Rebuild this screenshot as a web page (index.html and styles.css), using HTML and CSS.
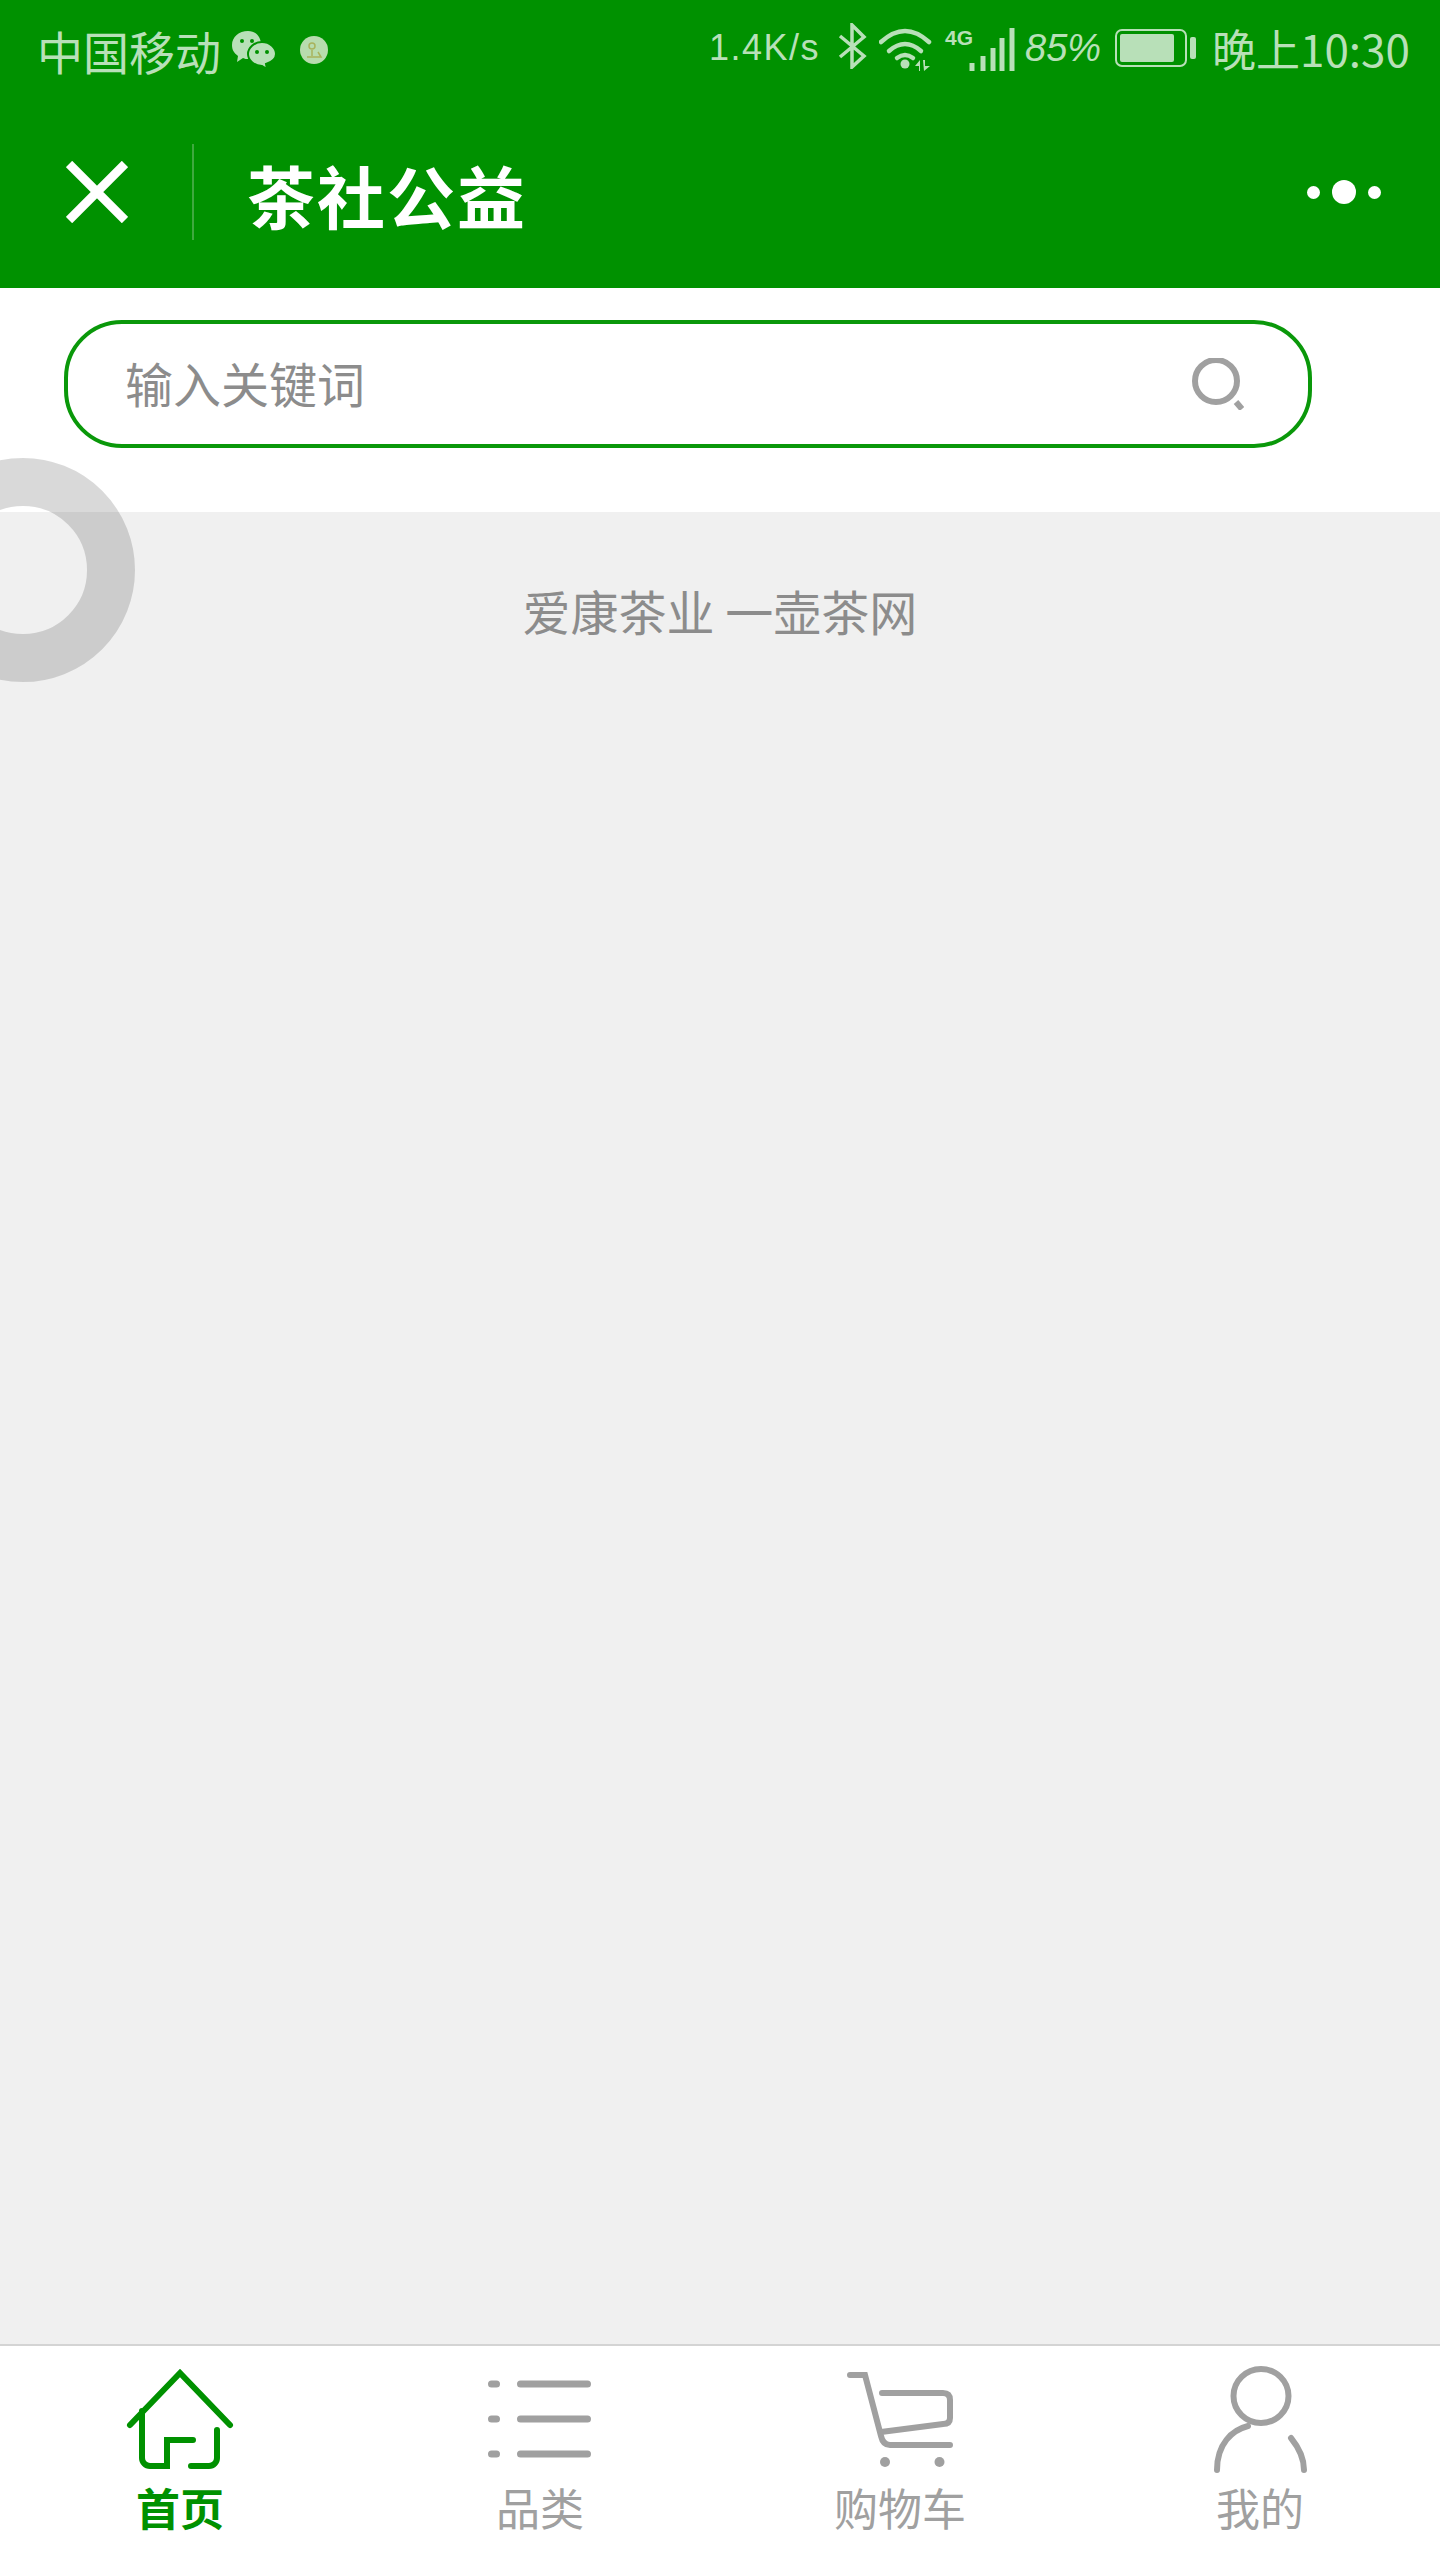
FILE: index.html

```html
<!DOCTYPE html>
<html>
  <head>
    <title>茶社公益</title>
    <link rel="stylesheet" href="styles.css">
  </head>
  <body>
    <div id="page">
      <header class="top">
        <div class="status">
          <div class="status-left">
            <span class="carrier">中国移动</span>
            <svg class="wechat" width="44" height="38" viewBox="0 0 44 38">
              <path d="M16 0C7 0 0 6 0 14c0 5 2 8 6 11l-1 6 6-4c2 1 3 1 5 1 7 0 13-7 13-14S25 0 16 0z" fill="#b8e0b8"/>
              <path d="M30 11c-8 0-14 6-14 12s6 12 14 12l5 3-1-5c6-2 10-6 10-10 0-6-6-12-14-12z" fill="#b8e0b8" stroke="#009100" stroke-width="2"/>
              <circle cx="10" cy="10" r="2" fill="#009100"/>
              <circle cx="20" cy="10" r="2" fill="#009100"/>
              <circle cx="25" cy="21" r="2" fill="#009100"/>
              <circle cx="35" cy="21" r="2" fill="#009100"/>
            </svg>
            <svg class="locate" width="28" height="28" viewBox="0 0 28 28">
              <circle cx="14" cy="14" r="14" fill="#b8dcae"/>
              <circle cx="12" cy="10" r="3" fill="none" stroke="#a9b35c" stroke-width="1.5"/>
              <path d="M12 14v6M7 21h14l-3-5" fill="none" stroke="#a9b35c" stroke-width="1.5"/>
            </svg>
          </div>
          <div class="status-right">
            <span class="speed">1.4K/s</span>
            <svg class="bt" width="30" height="46" viewBox="0 0 30 46">
              <path d="M3 13L27 33L15 44V2L27 14L3 34" fill="none" stroke="#b8e0b8" stroke-width="3.5"/>
            </svg>
            <svg class="wifi" width="53" height="43" viewBox="0 0 53 43">
              <path d="M2 14Q26-8 50 14" fill="none" stroke="#b8e0b8" stroke-width="4.5" stroke-linecap="round"/>
              <path d="M10 23Q26 9 42 23" fill="none" stroke="#b8e0b8" stroke-width="4.5" stroke-linecap="round"/>
              <path d="M18 30Q26 24 34 30" fill="none" stroke="#b8e0b8" stroke-width="4.5" stroke-linecap="round"/>
              <circle cx="26" cy="36" r="4.5" fill="#b8e0b8"/>
              <path d="M36 38l5-6v11h-1v-5zM44 32h2v6h5l-6 5z" fill="#b8e0b8"/>
            </svg>
            <div class="cell">
              <span class="net">4G</span>
              <svg width="46" height="43" viewBox="0 0 46 43">
                <path d="M3 43V35M14 43V28M24 43V20M33 43V10M43 43V0" stroke="#b8e0b8" stroke-width="5"/>
              </svg>
            </div>
            <span class="percent">85%</span>
            <svg class="battery" width="81" height="38" viewBox="0 0 81 38">
              <rect x="1" y="1" width="70" height="36" rx="6" fill="none" stroke="#b8e0b8" stroke-width="2"/>
              <rect x="5" y="5" width="54" height="28" rx="2" fill="#b8e0b8"/>
              <rect x="75" y="8" width="6" height="22" rx="2" fill="#b8e0b8"/>
            </svg>
            <span class="clock">晚上10:30</span>
          </div>
        </div>
        <div class="nav">
          <svg class="close" width="62" height="62" viewBox="0 0 62 62">
            <path d="M3 3L59 59M59 3L3 59" stroke="#fff" stroke-width="9"/>
          </svg>
          <div class="divider"></div>
          <span class="title">茶社公益</span>
          <div class="more">
            <i class="dot"></i>
            <i class="dot dot-big"></i>
            <i class="dot"></i>
          </div>
        </div>
      </header>

      <div class="search-row">
        <div class="search">
          <input class="search-input" placeholder="输入关键词">
          <svg width="52" height="52" viewBox="0 0 52 52">
            <circle cx="24" cy="23" r="21" fill="none" stroke="#a0a0a0" stroke-width="6"/>
            <path d="M44 44L50 51" stroke="#a0a0a0" stroke-width="6"/>
          </svg>
        </div>
      </div>

      <main class="content">
        <p class="shop-name">爱康茶业 一壶茶网</p>
      </main>

      <nav class="tabs">
        <a class="tab tab-on">
          <svg width="120" height="112" viewBox="0 0 120 112" fill="none" stroke="#009100" stroke-width="6" stroke-linecap="round">
            <path d="M10 61L60 9L110 61"/>
            <path d="M22 47V94a8 8 0 0 0 8 8H47V76H73"/>
            <path d="M97 66V94a8 8 0 0 1-8 8H71"/>
          </svg>
          <span>首页</span>
        </a>
        <a class="tab">
          <svg width="120" height="112" viewBox="0 0 120 112" fill="none" stroke="#a0a0a0" stroke-width="7" stroke-linecap="round">
            <path d="M11.500 20H16.500M40.500 20H107.500"/>
            <path d="M11.500 55H16.500M40.500 55H107.500"/>
            <path d="M11.500 90H16.500M40.500 90H107.500"/>
          </svg>
          <span>品类</span>
        </a>
        <a class="tab">
          <svg width="120" height="112" viewBox="0 0 120 112" fill="none" stroke="#a0a0a0" stroke-width="6" stroke-linecap="round">
            <path d="M10 11H25L41 72Q43 81 50 81H110"/>
            <path d="M42 29H103Q110 29 110 36V54Q110 60 103 60L41 68"/>
            <circle cx="45" cy="98" r="5" fill="#a0a0a0" stroke="none"/>
            <circle cx="99.500" cy="98" r="5" fill="#a0a0a0" stroke="none"/>
          </svg>
          <span>购物车</span>
        </a>
        <a class="tab">
          <svg width="120" height="112" viewBox="0 0 120 112" fill="none" stroke="#a0a0a0" stroke-width="6" stroke-linecap="round">
            <ellipse cx="61" cy="32" rx="27.500" ry="27"/>
            <path d="M17 106C17 80 32 66 48 62"/>
            <path d="M91 74Q104 90 104 106"/>
          </svg>
          <span>我的</span>
        </a>
      </nav>

      <div class="float-ring"></div>
    </div>
  </body>
</html>
```

FILE: styles.css

```css
body {margin: 0; font-family: "Noto Sans CJK SC", "Noto Sans", sans-serif;}
#page {position: relative; display: flex; flex-direction: column; width: 1440px; height: 2560px; overflow: hidden; background-color: #fff;}

.top {background-color: #009100; height: 288px; flex: none;}

.status {display: flex; justify-content: space-between; height: 96px; padding: 0 34px 0 37px; color: #b8e0b8;}
.status-left {display: flex; align-items: center; height: 100px;}
.carrier {font-size: 46px; line-height: 46px; width: 195px;}
.locate {margin-left: 24px;}
.status-right {display: flex; align-items: center; height: 96px;}
.speed {font: 36px "Liberation Sans Narrow", "Liberation Sans", sans-serif; width: 111px; letter-spacing: 1.500px; white-space: nowrap;}
.bt {margin-left: 17px; margin-top: -4px;}
.wifi {margin-left: 12px; margin-top: 2px;}
.cell {display: flex; margin-left: 13px; margin-top: 2px; height: 43px;}
.net {font: bold 21px/19px "Liberation Sans Narrow", "Liberation Sans", sans-serif; width: 24px;}
.percent {font: italic 38px "Liberation Sans Narrow", "Liberation Sans", sans-serif; width: 73px; margin-left: 10px; white-space: nowrap;}
.battery {margin-left: 17px;}
.clock {font-family: "Liberation Sans Narrow", "Noto Sans CJK SC", sans-serif; font-size: 44px; line-height: 46px; width: 194px; margin-left: 16px; white-space: nowrap;}

.nav {display: flex; align-items: center; height: 192px; padding: 0 59px 0 66px;}
.divider {width: 2px; height: 96px; margin-left: 64px; background-color: #3fa93f;}
.title {font-size: 68px; font-weight: 700; line-height: 80px; color: #fff; margin-left: 53px; margin-top: 6px; letter-spacing: 2px;}
.more {display: flex; align-items: center; gap: 12px; margin-left: auto;}
.dot {display: block; width: 13px; height: 13px; border-radius: 50%; background-color: #fff;}
.dot-big {width: 24px; height: 24px;}

.search-row {flex: none; height: 224px; box-sizing: border-box; padding: 32px 128px 0 64px;}
.search {display: flex; align-items: center; box-sizing: border-box; height: 128px; padding: 0 64px 0 57px; border: 4px solid #0a980a; border-radius: 58px;}
.search-input {flex: 1; min-width: 0; border: 0; outline: 0; padding: 0 0 4px; height: 72px; font-family: inherit; font-size: 48px; background: none;}
.search-input::placeholder {color: #8c8c8c; opacity: 1;}

.content {flex: 1; background-color: #f0f0f0; padding-top: 62px;}
.shop-name {margin: 0; font-size: 48px; line-height: 72px; color: #8c8c8c; text-align: center;}

.tabs {display: grid; grid-template-columns: repeat(4, 1fr); flex: none; height: 214px; border-top: 2px solid #d4d4d4; background-color: #fff;}
.tab {display: flex; flex-direction: column; align-items: center; padding-top: 18px; color: #a0a0a0;}
.tab span {font-size: 44px; line-height: 56px; margin-top: 3px;}
.tab-on {color: #009100;}
.tab-on span {font-weight: 700;}

.float-ring {position: absolute; left: -89px; top: 458px; box-sizing: border-box; width: 224px; height: 224px; border: 48px solid rgba(0, 0, 0, 0.15); border-radius: 50%;}
```
